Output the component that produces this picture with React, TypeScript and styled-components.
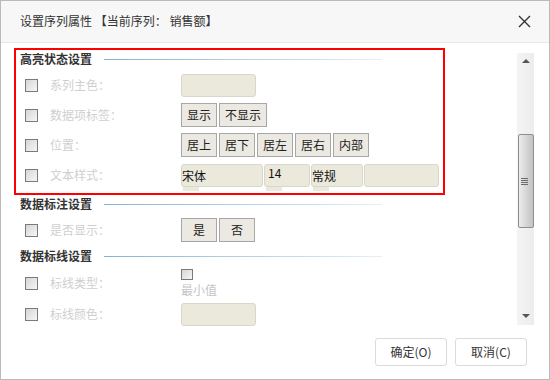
import styled, { createGlobalStyle } from "styled-components";

const GlobalStyle = createGlobalStyle`
  body {
    margin: 0;
    font-family: "Noto Sans CJK SC", "Noto Sans", sans-serif;
    font-size: 12px;
    color: #333;
  }
`;

const Dialog = styled.div`
  width: 550px;
  height: 380px;
  box-sizing: border-box;
  border: 1px solid #bababa;
  background: #ffffff;
  display: flex;
  flex-direction: column;
`;

const Header = styled.div`
  height: 42px;
  box-sizing: border-box;
  flex-shrink: 0;
  background: #f7f7f7;
  border-bottom: 1px solid #e8e8e8;
  display: flex;
  align-items: center;
  justify-content: space-between;
  padding: 0 17px 0 19px;
`;

const Title = styled.div`
  font-size: 12px;
  line-height: 16px;
  color: #333;
  padding-bottom: 1px;
`;

const CloseButton = styled.button`
  width: 16px;
  height: 16px;
  padding: 0;
  border: 0;
  background: none;
  display: flex;
  align-items: center;
  justify-content: center;
`;

const Body = styled.div`
  flex: 1;
  display: flex;
  padding: 5px 15px 0 13px;
  min-height: 0;
`;

const Content = styled.div`
  flex: 1;
  display: flex;
  flex-direction: column;
`;

const HighlightBox = styled.div`
  width: 431px;
  box-sizing: border-box;
  border: 2px solid #ff0000;
  padding: 0 4px 1px;
`;

const Section = styled.div`
  padding: 0 6px;
`;

const SectionHead = styled.div`
  width: 362px;
  height: 18px;
  display: flex;
  align-items: center;
  gap: 12px;
`;

const SectionTitle = styled.span`
  font-weight: bold;
  line-height: 18px;
  color: #333;
  white-space: nowrap;
`;

const SectionLine = styled.span`
  flex: 1;
  height: 1px;
  background: linear-gradient(to right, #86b3d3, #c6dcec 70%, #e6f0f7);
`;

const Rows = styled.div`
  padding: 2px 0;
`;

const Row = styled.div<{ $tall?: boolean }>`
  height: ${({ $tall }) => ($tall ? 32 : 30)}px;
  display: flex;
  align-items: center;
  padding-left: 5px;
`;

const Check = styled.span<{ $small?: boolean }>`
  display: inline-block;
  flex-shrink: 0;
  width: ${({ $small }) => ($small ? 12 : 13)}px;
  height: ${({ $small }) => ($small ? 11 : 13)}px;
  box-sizing: border-box;
  border: 1px solid #7a7a7a;
  background: linear-gradient(135deg, #d6d6d6, #f6f6f6);
`;

const Label = styled.span`
  width: 131px;
  margin-left: 12px;
  flex-shrink: 0;
  color: #cfcfcf;
  line-height: 16px;
`;

const Controls = styled.div`
  display: flex;
  gap: 2px;
`;

const Stack = styled.div`
  display: flex;
  flex-direction: column;
  gap: 2px;
  padding-top: 1px;
`;

const Hint = styled.span`
  color: #c4c4c4;
  font-size: 12px;
  line-height: 16px;
`;

const OptButton = styled.button`
  height: 24px;
  min-width: 36px;
  box-sizing: border-box;
  padding: 0 5px;
  border: 1px solid #a7a7a7;
  background: #ebe9e1;
  color: #222;
  font-family: inherit;
  font-size: 12px;
  line-height: 16px;
`;

const Field = styled.div<{ $w: number; $tab?: boolean; $top?: boolean }>`
  position: relative;
  width: ${({ $w }) => $w}px;
  height: 23px;
  box-sizing: border-box;
  border: 1px solid #d9d6ca;
  border-radius: 3px;
  background: #ebe8dc;
  color: #111;
  font-size: 12px;
  line-height: ${({ $top }) => ($top ? 15 : 22)}px;
  padding-left: ${({ $top }) => ($top ? 3 : 0)}px;
  &::after {
    content: "";
    display: ${({ $tab }) => ($tab ? "block" : "none")};
    position: absolute;
    left: 1px;
    bottom: -5px;
    width: 16px;
    height: 4px;
    background: #ebe8dc;
  }
`;

const FieldRow = styled.div`
  display: flex;
  gap: 1px;
`;

const ScrollTrack = styled.div`
  width: 17px;
  height: 272px;
  margin-top: 5px;
  margin-left: 8px;
  flex-shrink: 0;
  background: linear-gradient(to right, #f4f4f4, #ececec);
  display: flex;
  flex-direction: column;
  align-items: center;
`;

const Arrow = styled.span<{ $down?: boolean }>`
  width: 0;
  height: 0;
  margin: ${({ $down }) => ($down ? "auto 0 7px" : "6px 0 0")};
  border-left: 4px solid transparent;
  border-right: 4px solid transparent;
  ${({ $down }) => ($down ? "border-top: 4px solid #555;" : "border-bottom: 4px solid #555;")}
`;

const Thumb = styled.div`
  width: 16px;
  height: 94px;
  box-sizing: border-box;
  margin: 71px 0 0 1px;
  border: 1px solid #8e8e8e;
  border-radius: 2px;
  background: linear-gradient(to right, #ececec, #d2d2d2 60%, #c4c4c4);
  display: flex;
  flex-direction: column;
  align-items: center;
  justify-content: center;
  gap: 1px;
`;

const Grip = styled.span`
  width: 7px;
  height: 1px;
  background: #6a6a6a;
  margin-left: -3px;
`;

const Footer = styled.div`
  height: 49px;
  flex-shrink: 0;
  box-sizing: border-box;
  display: flex;
  justify-content: flex-end;
  align-items: flex-start;
  gap: 8px;
  padding: 8px 22px 0 0;
`;

const FooterButton = styled.button`
  width: 72px;
  height: 28px;
  box-sizing: border-box;
  border: 1px solid #dadada;
  border-radius: 3px;
  background: #ffffff;
  color: #333;
  font-family: inherit;
  font-size: 12px;
  line-height: 16px;
`;

const Close = () => (
  <svg width="13" height="13" viewBox="0 0 13 13">
    <path d="M1 1 L12 12 M12 1 L1 12" stroke="#333" strokeWidth="1.4" />
  </svg>
);

const ItemRow = ({ label, children }: { label: string; children: React.ReactNode }) => (
  <Row>
    <Check />
    <Label>{label}</Label>
    {children}
  </Row>
);

export default function App() {
  return (
    <>
      <GlobalStyle />
      <Dialog>
        <Header>
          <Title>设置序列属性 【当前序列： 销售额】</Title>
          <CloseButton aria-label="关闭">
            <Close />
          </CloseButton>
        </Header>
        <Body>
          <Content>
            <HighlightBox>
              <SectionHead>
                <SectionTitle>高亮状态设置</SectionTitle>
                <SectionLine />
              </SectionHead>
              <Rows>
                <ItemRow label="系列主色：">
                  <Field $w={75} />
                </ItemRow>
                <ItemRow label="数据项标签：">
                  <Controls>
                    <OptButton>显示</OptButton>
                    <OptButton>不显示</OptButton>
                  </Controls>
                </ItemRow>
                <ItemRow label="位置：">
                  <Controls>
                    {["居上", "居下", "居左", "居右", "内部"].map((p) => (
                      <OptButton key={p}>{p}</OptButton>
                    ))}
                  </Controls>
                </ItemRow>
                <ItemRow label="文本样式：">
                  <FieldRow>
                    <Field $w={82} $tab>宋体</Field>
                    <Field $w={46} $tab $top>14</Field>
                    <Field $w={52} $tab>常规</Field>
                    <Field $w={75} />
                  </FieldRow>
                </ItemRow>
              </Rows>
            </HighlightBox>
            <Section>
              <SectionHead>
                <SectionTitle>数据标注设置</SectionTitle>
                <SectionLine />
              </SectionHead>
              <Rows>
                <ItemRow label="是否显示：">
                  <Controls>
                    <OptButton>是</OptButton>
                    <OptButton>否</OptButton>
                  </Controls>
                </ItemRow>
              </Rows>
            </Section>
            <Section>
              <SectionHead>
                <SectionTitle>数据标线设置</SectionTitle>
                <SectionLine />
              </SectionHead>
              <Rows>
                <Row $tall>
                  <Check />
                  <Label>标线类型：</Label>
                  <Stack>
                    <Check $small />
                    <Hint>最小值</Hint>
                  </Stack>
                </Row>
                <ItemRow label="标线颜色：">
                  <Field $w={75} />
                </ItemRow>
              </Rows>
            </Section>
          </Content>
          <ScrollTrack>
            <Arrow />
            <Thumb>
              <Grip />
              <Grip />
              <Grip />
              <Grip />
            </Thumb>
            <Arrow $down />
          </ScrollTrack>
        </Body>
        <Footer>
          <FooterButton>确定(O)</FooterButton>
          <FooterButton>取消(C)</FooterButton>
        </Footer>
      </Dialog>
    </>
  );
}
